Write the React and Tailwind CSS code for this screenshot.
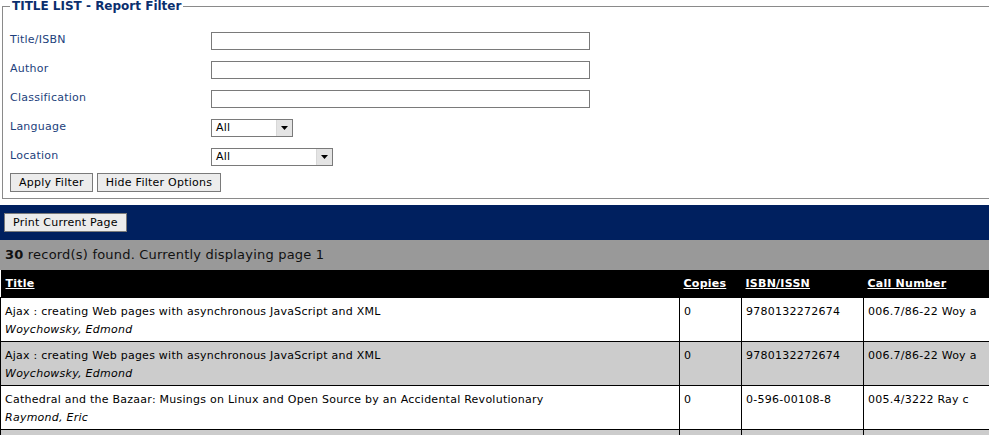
import React from "react";

const rows = [
  {
    title: "Ajax : creating Web pages with asynchronous JavaScript and XML",
    author: "Woychowsky, Edmond",
    copies: "0",
    isbn: "9780132272674",
    call: "006.7/86-22 Woy a",
  },
  {
    title: "Ajax : creating Web pages with asynchronous JavaScript and XML",
    author: "Woychowsky, Edmond",
    copies: "0",
    isbn: "9780132272674",
    call: "006.7/86-22 Woy a",
  },
  {
    title: "Cathedral and the Bazaar: Musings on Linux and Open Source by an Accidental Revolutionary",
    author: "Raymond, Eric",
    copies: "0",
    isbn: "0-596-00108-8",
    call: "005.4/3222 Ray c",
  },
  {
    title: "",
    author: "",
    copies: "",
    isbn: "",
    call: "",
  },
];

const FakeSelect = ({ width }) => (
  <div className={`flex h-[18px] ${width} items-stretch border border-[#7a7a7a] bg-white`}>
    <span className="flex-1 pl-[4px] text-[11px] leading-[16px] text-black">All</span>
    <span className="flex w-[16px] items-center justify-center border-l border-[#d8d8d8] bg-[#e4e4e4]">
      <svg width="7" height="4" viewBox="0 0 7 4">
        <path d="M0 0h7L3.5 4z" fill="#000" />
      </svg>
    </span>
  </div>
);

const Btn = ({ children, className = "" }) => (
  <button
    className={`h-[19px] border border-[#7a7a7a] bg-[#ececec] px-[8px] text-[11px] leading-[17px] tracking-[0.25px] text-black ${className}`}
  >
    {children}
  </button>
);

const App = () => {
  const fields = ["Title/ISBN", "Author", "Classification"];

  return (
    <div
      className="h-[435px] w-[989px] overflow-hidden bg-white text-[11px] tracking-[0.25px] text-black"
      style={{ fontFamily: "'DejaVu Sans', Verdana, sans-serif" }}
    >
      <div className="px-[2px]">
        <fieldset className="mr-[-20px] border border-[#8a8a8a] pb-[6px] pl-[7px] pt-[13px]">
          <legend className="px-[2px] text-[12px] font-bold leading-[13px] tracking-normal text-[#0b2f6e]">
            TITLE LIST - Report Filter
          </legend>
          <div className="flex flex-col">
            {fields.map((f) => (
              <div key={f} className="flex h-[29px] items-center">
                <label className="w-[201px] text-[11px] text-[#1d3f7c]">{f}</label>
                <input className="h-[18px] w-[379px] border border-[#7a7a7a] bg-white" />
              </div>
            ))}
            <div className="flex h-[29px] items-center">
              <label className="w-[201px] text-[11px] text-[#1d3f7c]">Language</label>
              <FakeSelect width="w-[82px]" />
            </div>
            <div className="flex h-[29px] items-center">
              <label className="w-[201px] text-[11px] text-[#1d3f7c]">Location</label>
              <FakeSelect width="w-[122px]" />
            </div>
            <div className="mt-[2px] flex gap-[4px]">
              <Btn>Apply Filter</Btn>
              <Btn>Hide Filter Options</Btn>
            </div>
          </div>
        </fieldset>
      </div>

      <div className="mt-[6px] flex h-[35px] items-center bg-[#00205f] pl-[4px]">
        <Btn>Print Current Page</Btn>
      </div>

      <div className="flex h-[30px] items-center bg-[#999999] pl-[5px] text-[13px] tracking-[0.2px] text-[#111]">
        <b>30</b>&nbsp;record(s) found. Currently displaying page 1
      </div>

      <table className="w-[1000px] border-collapse text-[11px]">
        <colgroup>
          <col className="w-[679px]" />
          <col className="w-[62px]" />
          <col className="w-[122px]" />
          <col />
        </colgroup>
        <thead>
          <tr className="h-[27px] bg-black text-left font-bold text-white">
            <th className="pl-[5px] pt-[2px] font-bold underline">Title</th>
            <th className="pl-[4px] pt-[2px] font-bold underline">Copies</th>
            <th className="pl-[4px] pt-[2px] font-bold underline">ISBN/ISSN</th>
            <th className="pl-[4px] pt-[2px] font-bold underline">Call Number</th>
          </tr>
        </thead>
        <tbody>
          {rows.map((r, i) => (
            <tr key={i} className={`h-[44px] align-top ${i % 2 ? "bg-[#cccccc]" : "bg-white"}`}>
              <td className="border border-black pl-[4px] pt-[5px] leading-[18px]">
                <div>{r.title}</div>
                <div className="italic">{r.author}</div>
              </td>
              <td className="border border-black pl-[4px] pt-[5px] leading-[18px]">{r.copies}</td>
              <td className="border border-black pl-[4px] pt-[5px] leading-[18px]">{r.isbn}</td>
              <td className="border border-black pl-[4px] pt-[5px] leading-[18px]">{r.call}</td>
            </tr>
          ))}
        </tbody>
      </table>
    </div>
  );
};

export default App;
